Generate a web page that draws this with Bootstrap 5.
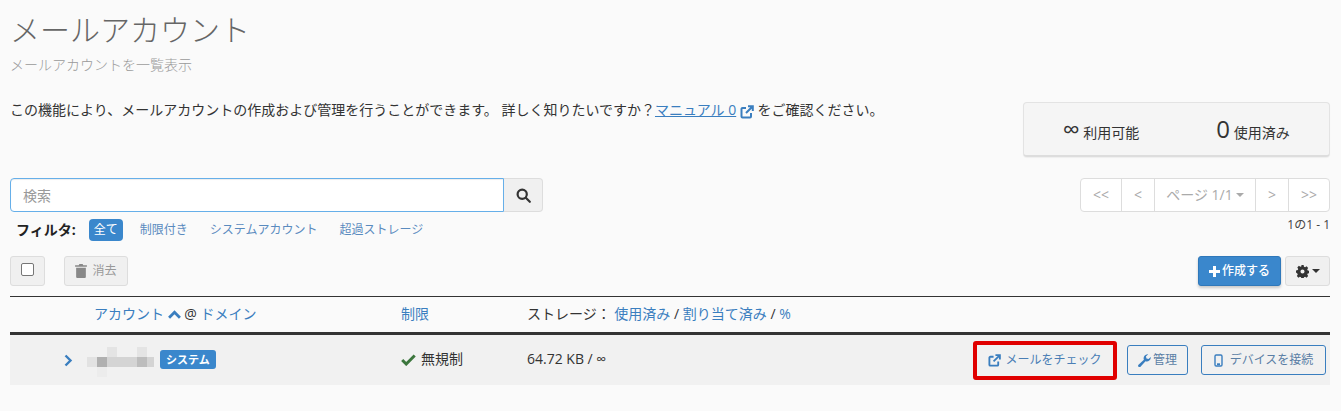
<!DOCTYPE html>
<html lang="ja"><head><meta charset="utf-8">
<link href="https://cdn.jsdelivr.net/npm/bootstrap@5.3.0/dist/css/bootstrap.min.css" rel="stylesheet">
<style>
html,body{height:411px;overflow:hidden}
body{background:#fafafa;color:#333;font-family:"Open Sans","Noto Sans CJK JP",sans-serif;font-size:14px;line-height:20px;padding:0 11px 0 10px}
a{color:#3a7ebf;text-decoration:none}
.ttl{font-size:30px;font-weight:300;line-height:34px;color:#666;margin:13px 0 0}
.sub{font-size:14px;color:#999;font-weight:300;line-height:20px;margin-top:8px}
.top-row{margin-top:25px;height:71px}
.intro a.man{text-decoration:underline}
.stats{width:307px;height:55px;margin-top:2px;padding-left:1px;background:#f5f5f5;border:1px solid #e3e3e3;border-bottom:2px solid #ddd;border-radius:4px;box-shadow:0 1px 1px rgba(0,0,0,.05)}
.stats .cell{width:50%;text-align:center}
.stats .num{font-size:24px;line-height:26px}
.srch{width:533px;height:34px}
.srch input{flex:1;height:34px;border:1px solid #66afe9;border-radius:4px 0 0 4px;padding:6px 12px;background:#fff;outline:0;font-size:14px;font-family:inherit;box-shadow:inset 0 1px 1px rgba(0,0,0,.075)}
.srch input::placeholder{color:#999}
.srch .sbtn{width:39px;border:1px solid #ddd;border-left:0;border-radius:0 4px 4px 0;background:#f0f0f0}
.pager{height:34px;border:1px solid #ddd;border-radius:4px;background:#fff;color:#aaa}
.pager span{display:flex;align-items:center;justify-content:center;height:100%;border-left:1px solid #ddd;width:33px}
.pager span:first-child{border-left:0;width:40px}
.pager span.pg{width:101px}
.pager span:last-child{width:41px}
.caretx{display:inline-block;border-top:4px solid currentColor;border-left:4px solid transparent;border-right:4px solid transparent;margin-left:3px;vertical-align:middle}
.frow{font-size:12px;height:22px;margin-top:7px}
.frow b{font-size:14px;margin:0 13px 0 6px;color:#222}
.fon{background:#3a87cc;color:#fff;border-radius:4px;padding:0 5px;line-height:22px;font-size:12px;margin-right:17px}
.frow a{margin-right:22px;color:#5a8bbf}
.cnt{font-size:12px;text-align:right;color:#444;line-height:18px;margin-top:4px}
.tools{height:30px;margin-top:15px}
.gbtn{height:30px;border:1px solid #ddd;border-radius:3px;background:#f0f0f0;display:flex;align-items:center;justify-content:center}
.chk{width:35px;margin-right:19px}
.chk i{display:block;width:13px;height:13px;border:1px solid #767676;border-radius:2px;background:#fff;margin-top:-3px}
.del{width:64px;color:#999;font-size:12px;gap:5px}
.mk{height:30px;width:83px;background:#3a87cc;border:1px solid #2f78ba;border-radius:3px;color:#fff;font-size:12px;font-weight:500;display:flex;align-items:center;justify-content:center;gap:2px;margin-right:4px;box-shadow:0 2px 3px rgba(0,0,0,.2)}
.gear{width:45px;gap:3px;color:#333}
.thd{margin-top:10px;height:39px;padding-bottom:2px;border-top:1px solid #333;border-bottom:3px solid #333;align-items:center}
.trw{height:50px;background:#f1f1f1;align-items:center}
.c1{width:84px;flex:none}.c2{width:307px;flex:none}.c3{width:126px;flex:none}
.tag{background:#3a87cc;color:#fff;font-size:11px;font-weight:700;border-radius:3px;line-height:19px;padding:0 6px;margin-left:6px}
.mute{margin-bottom:2px}
.tick{margin-right:5px}
.act{height:30px;border:1px solid #3a7ebf;border-radius:3px;color:#5a7ea5;font-size:12px;display:flex;align-items:center;justify-content:center;gap:4px;background:transparent}
.hl{border:4px solid #e00000;border-radius:3px;width:144px;height:39px;margin-right:10px;color:#4a7eb5}
.mg{width:61px;margin-right:13px;gap:2px}
.dv{width:125px;margin-right:4px;gap:7px}
</style></head><body>
<h1 class="ttl">メールアカウント</h1>
<div class="sub">メールアカウントを一覧表示</div>
<div class="d-flex justify-content-between top-row">
  <div class="intro">この機能により、メールアカウントの作成および管理を行うことができます。 詳しく知りたいですか？<a class="man" href="#">マニュアル 0</a> <svg width="14" height="14" viewBox="0 0 14 14" fill="none" stroke="#3a7ebf" stroke-width="2" class="align-text-bottom"><path d="M11 8v3.500a1 1 0 0 1-1 1H2.500a1 1 0 0 1-1-1V4a1 1 0 0 1 1-1H6"/><path d="M6 8l6-6M8 1.200h4.800V6"/></svg> をご確認ください。</div>
  <div class="stats d-flex align-items-center flex-shrink-0">
    <div class="cell"><span class="num">∞</span> 利用可能</div>
    <div class="cell"><span class="num">0</span> 使用済み</div>
  </div>
</div>
<div class="d-flex justify-content-between align-items-start" style="margin-top:7px">
  <div>
    <div class="srch d-flex"><input placeholder="検索"><div class="sbtn d-flex align-items-center justify-content-center"><svg width="15" height="15" viewBox="0 0 15 15" fill="none" stroke="#333" stroke-width="2.2"><circle cx="6.2" cy="6.2" r="4.6"/><path d="M9.800 9.800l4 4" stroke-linecap="round"/></svg></div></div>
    <div class="frow d-flex align-items-center"><b>フィルタ:</b><span class="fon">全て</span><a href="#">制限付き</a><a href="#">システムアカウント</a><a href="#">超過ストレージ</a></div>
  </div>
  <div>
    <div class="pager d-flex"><span>&lt;&lt;</span><span>&lt;</span><span class="pg">ページ 1/1<i class="caretx"></i></span><span>&gt;</span><span>&gt;&gt;</span></div>
    <div class="cnt">1の1 - 1</div>
  </div>
</div>
<div class="tools d-flex justify-content-between">
  <div class="d-flex">
    <div class="gbtn chk"><i></i></div>
    <div class="gbtn del"><svg width="12" height="14" viewBox="0 0 11 13" fill="#888"><path d="M4 0h3l.6 1.200H11v1.300H0V1.200h3.400zM1 3.400h9V12a1 1 0 0 1-1 1H2a1 1 0 0 1-1-1z"/></svg>消去</div>
  </div>
  <div class="d-flex">
    <div class="mk"><svg width="11" height="11" viewBox="0 0 11 11" fill="#fff"><path d="M4 0h3v4h4v3H7v4H4V7H0V4h4z"/></svg>作成する</div>
    <div class="gbtn gear"><svg width="13" height="13" viewBox="0 0 14 14" fill="#333"><path fill-rule="evenodd" d="M5.800 0h2.400l.4 1.900 1.200.5 1.600-1 1.700 1.700-1 1.600.5 1.200 1.900.4v2.400l-1.900.4-.5 1.200 1 1.600-1.700 1.700-1.600-1-1.200.5-.4 1.900H5.800l-.4-1.900-1.200-.5-1.600 1-1.700-1.700 1-1.600-.5-1.200L0 8.200V5.800l1.900-.4.5-1.200-1-1.600 1.700-1.700 1.600 1 1.200-.5zM7 4.800a2.200 2.200 0 1 0 0 4.400 2.200 2.200 0 0 0 0-4.400z"/></svg><i class="caretx" style="margin-left:0"></i></div>
  </div>
</div>
<div class="thd d-flex">
  <div class="c1"></div>
  <div class="c2"><a href="#">アカウント</a> <svg width="13" height="9" viewBox="0 0 12 8" fill="none" stroke="#3a7ebf" stroke-width="2.6"><path d="M1 7l5-5 5 5"/></svg> @ <a href="#">ドメイン</a></div>
  <div class="c3"><a href="#">制限</a></div>
  <div>ストレージ： <a href="#">使用済み</a> / <a href="#">割り当て済み</a> / <a href="#">%</a></div>
</div>
<div class="trw d-flex">
  <div class="c1 d-flex align-items-center" style="padding-left:54px;width:77px"><svg width="9" height="13" viewBox="0 0 9 13" fill="none" stroke="#3a7ebf" stroke-width="2.4"><path d="M1.500 1.500l5 5-5 5"/></svg></div>
  <div class="d-flex align-items-center" style="width:314px">
    <svg width="67" height="30" viewBox="0 0 67 30" style="flex:none;margin-top:4px"><rect x="0" y="10" width="67" height="10" fill="#d4d4d4"/><rect x="0" y="10" width="10" height="10" fill="#e2e2e2"/><rect x="10" y="10" width="10" height="10" fill="#b0b0b0"/><rect x="20" y="0" width="10" height="10" fill="#e4e4e4"/><rect x="50" y="0" width="10" height="10" fill="#e4e4e4"/><rect x="50" y="10" width="10" height="10" fill="#bdbdbd"/><rect x="10" y="20" width="10" height="10" fill="#ececec"/></svg>
    <span class="tag mute">システム</span>
  </div>
  <div class="c3 mute"><svg class="tick" width="15" height="12" viewBox="0 0 15 12" fill="none" stroke="#3c763d" stroke-width="3"><path d="M1.200 6l4 4 8.500-8.500"/></svg>無規制</div>
  <div class="mute" style="flex:1">64.72 KB / ∞</div>
  <div class="d-flex align-items-center">
    <div class="act hl"><svg width="13" height="13" viewBox="0 0 14 14" fill="none" stroke="#3a7ebf" stroke-width="2"><path d="M11 8v3.500a1 1 0 0 1-1 1H2.500a1 1 0 0 1-1-1V4a1 1 0 0 1 1-1H6"/><path d="M6 8l6-6M8 1.200h4.800V6"/></svg>メールをチェック</div>
    <div class="act mg"><svg width="13" height="13" viewBox="0 0 13 13" fill="#3a7ebf"><path d="M12.800 3a4 4 0 0 1-5.300 4.200L2.500 12.700a1.300 1.300 0 0 1-2-1.900l5.400-5.100A4 4 0 0 1 10.200.3L7.900 2.600l.6 2 2 .5z"/></svg>管理</div>
    <div class="act dv"><svg width="9" height="13" viewBox="0 0 9 13" fill="none" stroke="#3a7ebf" stroke-width="1.4"><rect x="1" y="1" width="7" height="11" rx="1.200"/><path d="M3 10.200h3" stroke-width="1.800"/></svg>デバイスを接続</div>
  </div>
</div>
</body></html>
